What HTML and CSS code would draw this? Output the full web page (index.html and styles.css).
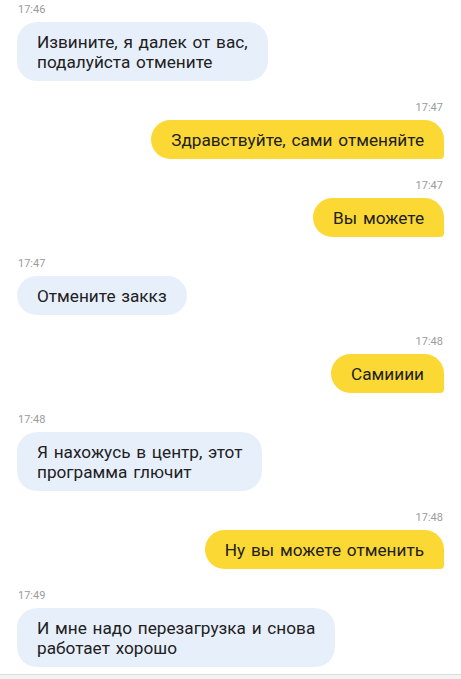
FILE: index.html
```html
<!DOCTYPE html>
<html lang="ru">
<head>
<meta charset="utf-8">
<title>Чат</title>
<link rel="stylesheet" href="styles.css">
</head>
<body>
<div class="chat">
  <div class="msg in">
    <div class="time">17:46</div>
    <div class="bubble">Извините, я далек от вас,<br>подалуйста отмените</div>
  </div>
  <div class="msg out">
    <div class="time">17:47</div>
    <div class="bubble">Здравствуйте, сами отменяйте</div>
  </div>
  <div class="msg out">
    <div class="time">17:47</div>
    <div class="bubble">Вы можете</div>
  </div>
  <div class="msg in">
    <div class="time">17:47</div>
    <div class="bubble">Отмените заккз</div>
  </div>
  <div class="msg out">
    <div class="time">17:48</div>
    <div class="bubble">Самииии</div>
  </div>
  <div class="msg in">
    <div class="time">17:48</div>
    <div class="bubble">Я нахожусь в центр, этот<br>программа глючит</div>
  </div>
  <div class="msg out">
    <div class="time">17:48</div>
    <div class="bubble">Ну вы можете отменить</div>
  </div>
  <div class="msg in">
    <div class="time">17:49</div>
    <div class="bubble">И мне надо перезагрузка и снова<br>работает хорошо</div>
  </div>
</div>
<div class="footer"></div>
</body>
</html>
```
FILE: styles.css
```css
html, body {
  margin: 0;
  padding: 0;
  background: #ffffff;
  height: 100%;
}
body {
  font-family: Roboto, "Noto Sans", Arial, sans-serif;
  color: #21201f;
  display: flex;
  flex-direction: column;
}
.chat {
  display: flex;
  flex-direction: column;
  gap: 20px;
  padding: 3px 17px 0 17px;
}
.msg {
  display: flex;
  flex-direction: column;
  gap: 5px;
}
.msg.in {
  align-items: flex-start;
}
.msg.out {
  align-items: flex-end;
}
.time {
  font-size: 11px;
  line-height: 14px;
  color: #9b9b9b;
  padding: 0 1px;
}
.bubble {
  font-size: 17.2px;
  line-height: 20px;
  word-spacing: 1.5px;
  padding: 10px 20px 9px 20px;
  border-radius: 20px;
  white-space: nowrap;
}
.in .bubble {
  background: #e7f0fa;
}
.out .bubble {
  background: #fbd834;
  border-bottom-right-radius: 4px;
}
.footer {
  margin-top: 7px;
  border-top: 1px solid #dcdcdc;
  background: #f3f3f3;
  flex: 1;
}
```
